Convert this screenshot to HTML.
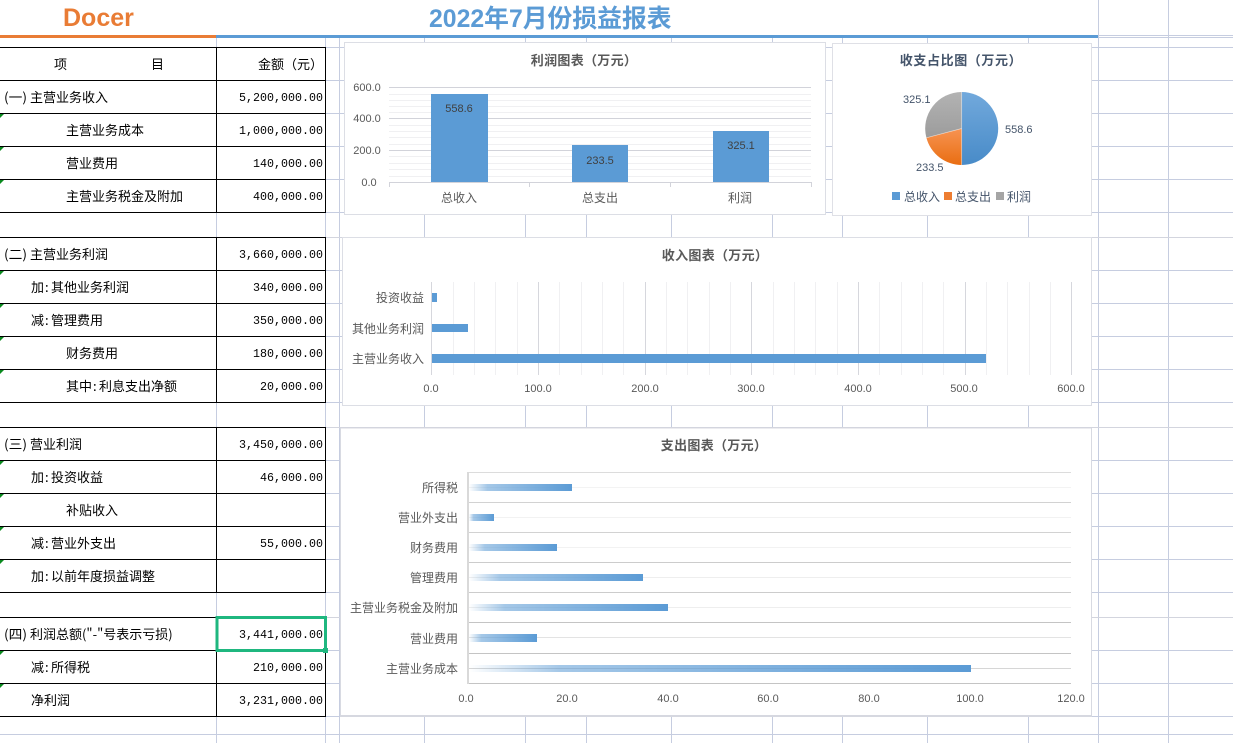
<!DOCTYPE html>
<html lang="zh"><head><meta charset="utf-8"><title>2022年7月份损益报表</title>
<style>
html,body{margin:0;padding:0;background:#fff;width:1233px;height:743px;overflow:hidden}
svg{display:block}
.c{font:13px "WenQuanYi Zen Hei","Noto Sans CJK SC",sans-serif;fill:#000}
.n{font:11.67px "Liberation Mono",monospace;fill:#000;text-anchor:end}
.t{font:bold 13px "Liberation Sans","Noto Sans CJK SC",sans-serif;fill:#595959;text-anchor:middle;letter-spacing:.3px}
.a{font:11px "Liberation Sans",sans-serif;fill:#595959;text-anchor:middle}
.l{font:12px "Liberation Sans","Noto Sans CJK SC",sans-serif;fill:#595959}
.e{text-anchor:end}
.m{text-anchor:middle}
.p{font:11px "Liberation Sans",sans-serif;fill:#44546a}
.d{font:11px "Liberation Sans",sans-serif;fill:#404040;text-anchor:middle}
</style></head><body>
<svg width="1233" height="743" viewBox="0 0 1233 743" xmlns="http://www.w3.org/2000/svg">
<defs>
<linearGradient id="g1" x1="0" x2="0" y1="0" y2="1"><stop offset="0" stop-color="#72a9dc"/><stop offset="1" stop-color="#488bc8"/></linearGradient>
<linearGradient id="g2" x1="0" x2="0" y1="0" y2="1"><stop offset="0" stop-color="#f79352"/><stop offset="1" stop-color="#e96e12"/></linearGradient>
<linearGradient id="g3" x1="0" x2="0" y1="0" y2="1"><stop offset="0" stop-color="#b3b3b3"/><stop offset="1" stop-color="#9c9c9c"/></linearGradient>
<linearGradient id="b1" x1="0" x2="1" y1="0" y2="0"><stop offset="0" stop-color="#5b9bd5" stop-opacity="0"/><stop offset=".18" stop-color="#5b9bd5" stop-opacity=".55"/><stop offset="1" stop-color="#5b9bd5"/></linearGradient>
</defs>
<g shape-rendering="crispEdges">
<!-- sheet grid -->
<path fill="none" stroke="#c6cde0" stroke-width="1" d="M326 47.5H1233M326 80.5H1233M326 113.5H1233M326 146.5H1233M326 179.5H1233M326 212.5H1233M326 270.5H1233M326 303.5H1233M326 336.5H1233M326 369.5H1233M326 402.5H1233M326 460.5H1233M326 493.5H1233M326 526.5H1233M326 559.5H1233M326 592.5H1233M326 650.5H1233M326 683.5H1233M326 716.5H1233M0 734.5H1233M1098 35.5H1233M1098 37.5H1233
M216.5 38V743M325.5 38V743M339.5 38V743M424.5 38V743M525.5 38V743M586.5 38V743M671.5 38V743M772.5 38V743M842.5 38V743M927.5 38V743M1028.5 38V743M1098.5 0V743M1168.5 0V743"/>
<path fill="none" stroke="#d3d5de" d="M326 237.5H1233M326 427.5H1233M326 617.5H1233"/>
<!-- header rules -->
<rect x="0" y="35" width="216" height="3" fill="#e97c35"/>
<rect x="216" y="35" width="882" height="3" fill="#5b9bd5"/>
<!-- table rules -->
<path fill="none" stroke="#000" d="M0 47.5H326M0 80.5H326M0 113.5H326M0 146.5H326M0 179.5H326M0 212.5H326M0 237.5H326M0 270.5H326M0 303.5H326M0 336.5H326M0 369.5H326M0 402.5H326M0 427.5H326M0 460.5H326M0 493.5H326M0 526.5H326M0 559.5H326M0 592.5H326M0 617.5H326M0 650.5H326M0 683.5H326M0 716.5H326
M216.5 47V213M325.5 47V213M216.5 237V403M325.5 237V403M216.5 427V593M325.5 427V593M216.5 617V717M325.5 617V717"/>
</g>
<!-- green comment marks -->
<path fill="#0a8a1e" d="M0 114h4l-4 4zM0 147h4l-4 4zM0 180h4l-4 4zM0 271h4l-4 4zM0 304h4l-4 4zM0 337h4l-4 4zM0 370h4l-4 4zM0 461h4l-4 4zM0 494h4l-4 4zM0 527h4l-4 4zM0 560h4l-4 4zM0 651h4l-4 4zM0 684h4l-4 4z"/>

<!-- title -->
<text x="63" y="26" style="font:bold 25px 'Liberation Sans',sans-serif;fill:#e97c35">Docer</text>
<text x="429" y="27" style="font:bold 24.8px 'Liberation Sans','Noto Sans CJK SC',sans-serif;fill:#5b9bd5">2022年7月份损益报表</text>

<!-- table text -->
<g>
<text class="c" x="54" y="69">项</text><text class="c" x="151" y="69">目</text>
<text class="c" x="258" y="69">金额（元）</text>

<text class="c" x="4" y="102" textLength="23" lengthAdjust="spacingAndGlyphs">(一)</text><text class="c" x="30" y="102">主营业务收入</text>
<text class="c" x="66" y="135">主营业务成本</text>
<text class="c" x="66" y="168">营业费用</text>
<text class="c" x="66" y="201">主营业务税金及附加</text>

<text class="c" x="4" y="259" textLength="23" lengthAdjust="spacingAndGlyphs">(二)</text><text class="c" x="30" y="259">主营业务利润</text>
<text class="c" x="31" y="292">加</text><text class="c" x="45" y="292">:</text><text class="c" x="51" y="292">其他业务利润</text>
<text class="c" x="31" y="325">减</text><text class="c" x="45" y="325">:</text><text class="c" x="51" y="325">管理费用</text>
<text class="c" x="66" y="358">财务费用</text>
<text class="c" x="66" y="391">其中</text><text class="c" x="93" y="391">:</text><text class="c" x="99" y="391">利息支出净额</text>

<text class="c" x="4" y="449" textLength="23" lengthAdjust="spacingAndGlyphs">(三)</text><text class="c" x="30" y="449">营业利润</text>
<text class="c" x="31" y="482">加</text><text class="c" x="45" y="482">:</text><text class="c" x="51" y="482">投资收益</text>
<text class="c" x="66" y="515">补贴收入</text>
<text class="c" x="31" y="548">减</text><text class="c" x="45" y="548">:</text><text class="c" x="51" y="548">营业外支出</text>
<text class="c" x="31" y="581">加</text><text class="c" x="45" y="581">:</text><text class="c" x="51" y="581">以前年度损益调整</text>

<text class="c" x="4" y="639" textLength="23" lengthAdjust="spacingAndGlyphs">(四)</text><text class="c" x="30" y="639">利润总额("-"号表示亏损)</text>
<text class="c" x="31" y="672">减</text><text class="c" x="45" y="672">:</text><text class="c" x="51" y="672">所得税</text>
<text class="c" x="31" y="705">净利润</text>

<text class="n" x="323" y="101">5,200,000.00</text>
<text class="n" x="323" y="134">1,000,000.00</text>
<text class="n" x="323" y="167">140,000.00</text>
<text class="n" x="323" y="200">400,000.00</text>
<text class="n" x="323" y="258">3,660,000.00</text>
<text class="n" x="323" y="291">340,000.00</text>
<text class="n" x="323" y="324">350,000.00</text>
<text class="n" x="323" y="357">180,000.00</text>
<text class="n" x="323" y="390">20,000.00</text>
<text class="n" x="323" y="448">3,450,000.00</text>
<text class="n" x="323" y="481">46,000.00</text>
<text class="n" x="323" y="547">55,000.00</text>
<text class="n" x="323" y="638">3,441,000.00</text>
<text class="n" x="323" y="671">210,000.00</text>
<text class="n" x="323" y="704">3,231,000.00</text>
</g>
<!-- selected cell -->
<g shape-rendering="crispEdges">
<rect x="217" y="617.5" width="108.5" height="33" fill="none" stroke="#1fb77f" stroke-width="3"/>
<rect x="323" y="648" width="5" height="5" fill="#1fb77f"/>
</g>

<!-- chart 1 -->
<g shape-rendering="crispEdges">
<rect x="344.5" y="42.5" width="481" height="172" fill="#fff" stroke="#dcdee5"/>
<path fill="none" stroke="#f0f0f2" d="M389 94.5H811M389 100.5H811M389 106.5H811M389 112.5H811M389 125.5H811M389 131.5H811M389 137.5H811M389 144.5H811M389 156.5H811M389 163.5H811M389 169.5H811M389 176.5H811"/>
<path fill="none" stroke="#d2d3da" d="M389 87.5H811M389 118.5H811M389 150.5H811M389 182.5H811M389.5 182V187M529.5 182V187M670.5 182V187M811.5 182V187"/>
<rect x="431" y="94" width="57" height="88" fill="#5b9bd5"/>
<rect x="572" y="145" width="56" height="37" fill="#5b9bd5"/>
<rect x="713" y="131" width="56" height="51" fill="#5b9bd5"/>
</g>
<text class="t" x="584" y="65">利润图表（万元）</text>
<text class="a" x="367" y="91">600.0</text><text class="a" x="367" y="122">400.0</text><text class="a" x="367" y="154">200.0</text><text class="a" x="369" y="186">0.0</text>
<text class="d" x="459" y="112">558.6</text><text class="d" x="600" y="164">233.5</text><text class="d" x="741" y="149">325.1</text>
<text class="l m" x="459" y="202">总收入</text><text class="l m" x="600" y="202">总支出</text><text class="l m" x="740" y="202">利润</text>

<!-- chart 2 -->
<rect x="832.5" y="43.5" width="259" height="172" fill="#fff" stroke="#dfe0e6" shape-rendering="crispEdges"/>
<text class="t" x="961" y="65" style="fill:#44546a;letter-spacing:.6px">收支占比图（万元）</text>
<path d="M961.7 128.5V92A36.5 36.5 0 0 1 961.7 165Z" fill="url(#g1)"/>
<path d="M961.7 128.5V165A36.5 36.5 0 0 1 926.4 137.8Z" fill="url(#g2)"/>
<path d="M961.7 128.5L926.4 137.8A36.5 36.5 0 0 1 961.7 92Z" fill="url(#g3)"/>
<path d="M961.7 92V165M961.7 128.5L926.4 137.8" stroke="#fff" stroke-opacity=".55" stroke-width=".7" fill="none"/>
<text class="p" x="903" y="103">325.1</text><text class="p" x="1005" y="133">558.6</text><text class="p" x="916" y="171">233.5</text>
<g shape-rendering="crispEdges"><rect x="892" y="192" width="8" height="8" fill="#5b9bd5"/><rect x="944" y="192" width="8" height="8" fill="#ed7d31"/><rect x="996" y="192" width="8" height="8" fill="#a5a5a5"/></g>
<text class="l" x="904" y="201" style="fill:#44546a">总收入</text><text class="l" x="955" y="201" style="fill:#44546a">总支出</text><text class="l" x="1007" y="201" style="fill:#44546a">利润</text>

<!-- chart 3 -->
<g shape-rendering="crispEdges">
<rect x="342.5" y="237.5" width="749" height="168" fill="#fff" stroke="#dcdee5"/>
<path fill="none" stroke="#f0f0f2" d="M453.5 282V375M474.5 282V375M495.5 282V375M517.5 282V375M559.5 282V375M581.5 282V375M602.5 282V375M623.5 282V375M666.5 282V375M687.5 282V375M709.5 282V375M730.5 282V375M773.5 282V375M794.5 282V375M815.5 282V375M837.5 282V375M879.5 282V375M901.5 282V375M922.5 282V375M943.5 282V375M986.5 282V375M1007.5 282V375M1029.5 282V375M1050.5 282V375"/>
<path fill="none" stroke="#d6d7dd" d="M431.5 282V375M538.5 282V375M645.5 282V375M751.5 282V375M858.5 282V375M965.5 282V375M1071.5 282V375"/>
<rect x="432" y="293" width="5" height="9" fill="#5b9bd5"/>
<rect x="432" y="324" width="36" height="8" fill="#5b9bd5"/>
<rect x="432" y="354" width="554" height="9" fill="#5b9bd5"/>
</g>
<text class="t" x="715" y="260">收入图表（万元）</text>
<text class="l e" x="424" y="302">投资收益</text><text class="l e" x="424" y="333">其他业务利润</text><text class="l e" x="424" y="363">主营业务收入</text>
<text class="a" x="431" y="392">0.0</text><text class="a" x="538" y="392">100.0</text><text class="a" x="645" y="392">200.0</text><text class="a" x="751" y="392">300.0</text><text class="a" x="858" y="392">400.0</text><text class="a" x="964" y="392">500.0</text><text class="a" x="1071" y="392">600.0</text>

<!-- chart 4 -->
<g shape-rendering="crispEdges">
<rect x="340.5" y="428" width="751" height="288" fill="#fff" stroke="#d8dae2"/>
<rect x="340" y="427" width="752" height="1" fill="#d3d5de"/>
<rect x="340" y="715" width="752" height="2" fill="#d6d8e0"/>
<path fill="none" stroke="#f3f3f3" d="M468 487.5H1071"/><path fill="none" stroke="#f2f2f2" d="M468 517.5H1071M468 547.5H1071"/><path fill="none" stroke="#eeeeee" d="M468 577.5H1071M468 607.5H1071"/><path fill="none" stroke="#e3e3e3" d="M468 637.5H1071"/><path fill="none" stroke="#d6d6d6" d="M468 668.5H1071"/>
<path fill="none" stroke="#dcdcdc" d="M468 472.5H1071"/><path fill="none" stroke="#d2d2d2" d="M468 502.5H1071M468 532.5H1071"/><path fill="none" stroke="#cccccc" d="M468 562.5H1071M468 592.5H1071"/><path fill="none" stroke="#c4c4c4" d="M468 622.5H1071M468 653.5H1071M468 683.5H1071"/>
<rect x="467" y="472" width="2" height="212" fill="#d9d9d9"/>
<rect x="469" y="484" width="103" height="7" fill="url(#b1)"/>
<rect x="469" y="514" width="25" height="7" fill="url(#b1)"/>
<rect x="469" y="544" width="88" height="7" fill="url(#b1)"/>
<rect x="469" y="574" width="174" height="7" fill="url(#b1)"/>
<rect x="469" y="604" width="199" height="7" fill="url(#b1)"/>
<rect x="469" y="634" width="68" height="8" fill="url(#b1)"/>
<rect x="469" y="665" width="502" height="7" fill="url(#b1)"/>
</g>
<text class="t" x="714" y="450">支出图表（万元）</text>
<text class="l e" x="458" y="492">所得税</text><text class="l e" x="458" y="522">营业外支出</text><text class="l e" x="458" y="552">财务费用</text><text class="l e" x="458" y="582">管理费用</text><text class="l e" x="458" y="612">主营业务税金及附加</text><text class="l e" x="458" y="643">营业费用</text><text class="l e" x="458" y="673">主营业务成本</text>
<text class="a" x="466" y="702">0.0</text><text class="a" x="567" y="702">20.0</text><text class="a" x="668" y="702">40.0</text><text class="a" x="768" y="702">60.0</text><text class="a" x="869" y="702">80.0</text><text class="a" x="970" y="702">100.0</text><text class="a" x="1071" y="702">120.0</text>
</svg>
</body></html>
